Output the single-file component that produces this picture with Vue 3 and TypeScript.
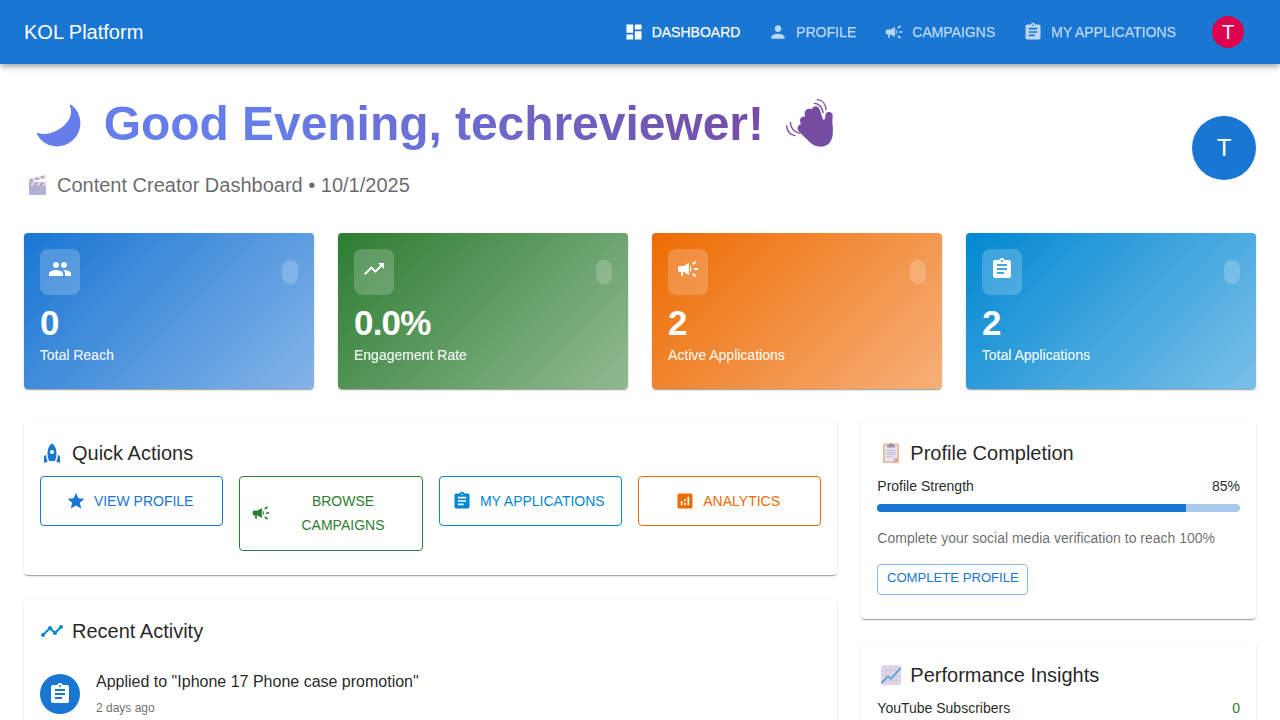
<script setup lang="ts">
const icons = {
  dashboard: 'M3 13h8V3H3v10zm0 8h8v-6H3v6zm10 0h8V11h-8v10zm0-18v6h8V3h-8z',
  person: 'M12 12c2.21 0 4-1.79 4-4s-1.79-4-4-4-4 1.79-4 4 1.79 4 4 4zm0 2c-2.67 0-8 1.34-8 4v2h16v-2c0-2.66-5.33-4-8-4z',
  campaign: 'M18 11v2h4v-2h-4zm-2 6.61c.96.71 2.21 1.65 3.2 2.39.4-.53.8-1.07 1.2-1.6-.99-.74-2.24-1.68-3.2-2.4-.4.54-.8 1.08-1.2 1.61zM20.4 5.6c-.4-.53-.8-1.07-1.2-1.6-.99.74-2.24 1.68-3.2 2.4.4.53.8 1.07 1.2 1.6.96-.72 2.21-1.65 3.2-2.4zM4 9c-1.1 0-2 .9-2 2v2c0 1.1.9 2 2 2h1v4h2v-4h1l5 3V6L8 9H4zm11.5 3c0-1.33-.58-2.53-1.5-3.35v6.69c.92-.81 1.5-2.01 1.5-3.34z',
  assignment: 'M19 3h-4.18C14.4 1.84 13.3 1 12 1c-1.3 0-2.4.84-2.82 2H5c-1.1 0-2 .9-2 2v14c0 1.1.9 2 2 2h14c1.1 0 2-.9 2-2V5c0-1.1-.9-2-2-2zm-7 0c.55 0 1 .45 1 1s-.45 1-1 1-1-.45-1-1 .45-1 1-1zm2 14H7v-2h7v2zm3-4H7v-2h10v2zm0-4H7V7h10v2z',
  people: 'M16 11c1.66 0 2.99-1.34 2.99-3S17.66 5 16 5c-1.66 0-3 1.34-3 3s1.34 3 3 3zm-8 0c1.66 0 2.99-1.34 2.99-3S9.66 5 8 5C6.34 5 5 6.34 5 8s1.34 3 3 3zm0 2c-2.33 0-7 1.17-7 3.5V19h14v-2.5c0-2.33-4.67-3.5-7-3.5zm8 0c-.29 0-.62.02-.97.05 1.16.84 1.97 1.97 1.97 3.45V19h6v-2.5c0-2.33-4.67-3.5-7-3.5z',
  trending: 'm16 6 2.29 2.29-4.88 4.88-4-4L2 16.59 3.41 18l6-6 4 4 6.3-6.29L22 12V6z',
  star: 'M12 17.27 18.18 21l-1.64-7.03L22 9.24l-7.19-.61L12 2 9.19 8.63 2 9.24l5.46 4.73L5.82 21z',
  analytics: 'M19 3H5c-1.1 0-2 .9-2 2v14c0 1.1.9 2 2 2h14c1.1 0 2-.9 2-2V5c0-1.1-.9-2-2-2zM9 17H7v-5h2v5zm4 0h-2v-3h2v3zm0-5h-2v-2h2v2zm4 5h-2V7h2v10z',
  rocket: 'M12 2.5s4.5 2.04 4.5 10.5c0 2.49-1.04 5.57-1.6 7H9.1c-.56-1.43-1.6-4.51-1.6-7C7.5 4.54 12 2.5 12 2.5zm2 8.5c0-1.1-.9-2-2-2s-2 .9-2 2 .9 2 2 2 2-.9 2-2zm-6.31 9.52c-.48-1.23-1.52-4.17-1.67-6.87l-1.13.75c-.56.38-.89 1-.89 1.67V22l3.69-1.48zM20 22v-5.93c0-.67-.33-1.29-.89-1.66l-1.13-.75c-.15 2.69-1.2 5.64-1.67 6.87L20 22z',
  timeline: 'M23 8c0 1.1-.9 2-2 2-.18 0-.35-.02-.51-.07l-3.56 3.55c.05.16.07.34.07.52 0 1.1-.9 2-2 2s-2-.9-2-2c0-.18.02-.36.07-.52l-2.55-2.55c-.16.05-.34.07-.52.07s-.36-.02-.52-.07l-4.55 4.56c.05.16.07.33.07.51 0 1.1-.9 2-2 2s-2-.9-2-2 .9-2 2-2c.18 0 .35.02.51.07l4.56-4.55C8.02 9.36 8 9.18 8 9c0-1.1.9-2 2-2s2 .9 2 2c0 .18-.02.36-.07.52l2.55 2.55c.16-.05.34-.07.52-.07s.36.02.52.07l3.55-3.56C19.02 8.35 19 8.18 19 8c0-1.1.9-2 2-2s2 .9 2 2z',
}

interface NavItem { label: string; icon: string; active?: boolean }
interface Stat { value: string; label: string; icon: string; tone: string }
interface Action { label: string; icon: string; tone: string }

const nav: NavItem[] = [
  { label: 'DASHBOARD', icon: icons.dashboard, active: true },
  { label: 'PROFILE', icon: icons.person },
  { label: 'CAMPAIGNS', icon: icons.campaign },
  { label: 'MY APPLICATIONS', icon: icons.assignment },
]

const stats: Stat[] = [
  { value: '0', label: 'Total Reach', icon: icons.people, tone: 'primary' },
  { value: '0.0%', label: 'Engagement Rate', icon: icons.trending, tone: 'success' },
  { value: '2', label: 'Active Applications', icon: icons.campaign, tone: 'warning' },
  { value: '2', label: 'Total Applications', icon: icons.assignment, tone: 'info' },
]

const actions: Action[] = [
  { label: 'VIEW PROFILE', icon: icons.star, tone: 'primary' },
  { label: 'BROWSE CAMPAIGNS', icon: icons.campaign, tone: 'success' },
  { label: 'MY APPLICATIONS', icon: icons.assignment, tone: 'info' },
  { label: 'ANALYTICS', icon: icons.analytics, tone: 'warning' },
]

const profileStrength = 85
</script>

<template>
  <div class="page">
    <header class="appbar">
      <div class="brand">KOL Platform</div>
      <nav class="nav">
        <a v-for="n in nav" :key="n.label" class="nav-item" :class="{ active: n.active }">
          <svg class="icon20" viewBox="0 0 24 24"><path :d="n.icon" /></svg>
          <span>{{ n.label }}</span>
        </a>
      </nav>
      <div class="avatar-sm">T</div>
    </header>

    <main class="container">
      <section class="hero">
        <div>
          <h1 class="greeting">
            <svg class="moon" viewBox="0 0 48 48">
              <path d="M36.6 4A23.2 23.2 0 1 1 2 33.6C1.6 32.4 2.3 31.8 3.4 32.1C13 35 25 30 31.8 21.5C36.5 15.5 37 10.5 34.9 5.2C34.5 3.9 35.4 3.2 36.6 4Z" />
            </svg>
            <span class="greeting-text">Good Evening, techreviewer!</span>
            <svg class="wave" viewBox="12 24 156 156">
              <path d="M136 78C136 70 140 66 147 66C154 66 158 70 158 77L157 98C159 110 159 121 158 134C156 155 143 170 122 170C108 170 98 165 89 156L57 125C49 116 54 104 63 102C56 90 62 78 76 80C70 66 78 52 95 58C101 45 114 47 118 57C123 66 124 76 129 88C132 92 136 88 136 78Z" />
              <g class="wave-lines">
                <path d="M112 29C127 30 137 42 138 59" />
                <path d="M103 40C117 41 127 52 129 68" />
                <path d="M20 107C21 124 30 134 45 137" />
                <path d="M31 97C32 114 42 126 58 130" />
              </g>
            </svg>
          </h1>
          <p class="subtitle">
            <svg class="clapper" viewBox="0 0 20 22">
              <defs>
                <linearGradient id="clapper-body" x1="0" y1="0" x2="0" y2="1">
                  <stop offset="0" stop-color="#b9abc8" />
                  <stop offset="1" stop-color="#adb2da" />
                </linearGradient>
              </defs>
              <path d="M1 5.3 17.2 1 18 3.9 1.8 8.3Z" fill="#e6deef" />
              <path d="M1 5.3 3.8 4.6 6 7.2 1.8 8.3ZM6.5 3.9 9.5 3.1 11.7 5.6 8.7 6.4ZM12.3 2.3 15.2 1.5 17.2 4.1 14.3 4.9Z" fill="#bba9cb" />
              <rect x="1" y="8" width="17" height="13" rx="1" fill="url(#clapper-body)" />
              <path d="M1 8.5h17v3H1Z" fill="#e3dbed" />
              <path d="M1 8.5h3L2.4 11.5H1ZM7 8.5h3l-1.8 3h-3ZM13 8.5h3l-1.8 3h-3Z" fill="#b39fc6" />
            </svg>
            <span>Content Creator Dashboard • 10/1/2025</span>
          </p>
        </div>
        <div class="avatar-lg">T</div>
      </section>

      <section class="stats">
        <article v-for="s in stats" :key="s.label" class="stat" :class="s.tone">
          <div class="stat-head">
            <div class="stat-icon">
              <svg class="icon24" viewBox="0 0 24 24"><path :d="s.icon" /></svg>
            </div>
            <span class="stat-chip"></span>
          </div>
          <div class="stat-value">{{ s.value }}</div>
          <div class="stat-label">{{ s.label }}</div>
        </article>
      </section>

      <div class="columns">
        <div class="column">
          <section class="card">
            <h2 class="title">
              <svg class="icon24 blue" viewBox="0 0 24 24"><path :d="icons.rocket" /></svg>
              <span>Quick Actions</span>
            </h2>
            <div class="actions">
              <button v-for="a in actions" :key="a.label" class="action" :class="a.tone">
                <svg class="icon20" viewBox="0 0 24 24"><path :d="a.icon" /></svg>
                <span>{{ a.label }}</span>
              </button>
            </div>
          </section>

          <section class="card">
            <h2 class="title">
              <svg class="icon24 sky" viewBox="0 0 24 24"><path :d="icons.timeline" /></svg>
              <span>Recent Activity</span>
            </h2>
            <div class="activity">
              <div class="activity-icon">
                <svg class="icon24" viewBox="0 0 24 24"><path :d="icons.assignment" /></svg>
              </div>
              <div>
                <div class="activity-text">Applied to "Iphone 17 Phone case promotion"</div>
                <div class="activity-time">2 days ago</div>
              </div>
            </div>
          </section>
        </div>

        <div class="column">
          <section class="card">
            <h2 class="title">
              <svg class="emoji" viewBox="0 0 28 24">
                <rect x="6" y="2.4" width="16" height="19.6" rx="1" fill="#eab795" />
                <path d="M7.7 4.2h12.6v12.6l-3.8 3.6H7.7Z" fill="#e9e3f1" />
                <path d="M20.3 16.6v3.8h-3.9Z" fill="#e09c72" />
                <path d="M16.4 20.4v-3.8h3.9Z" fill="#d2c5df" />
                <path d="M10 4h2a2 2 0 0 1 4 0h2v2.4h-8Z" fill="#9c94a5" />
                <path d="M9.2 9.3h9.6M9.2 11.4h9.6M9.2 13.5h9.6M9.2 15.6h6" stroke="#bdb2cd" stroke-width=".8" />
              </svg>
              <span>Profile Completion</span>
            </h2>
            <div class="row"><span>Profile Strength</span><span>{{ profileStrength }}%</span></div>
            <div class="track"><div class="fill" :style="{ width: profileStrength + '%' }"></div></div>
            <p class="hint">Complete your social media verification to reach 100%</p>
            <button class="small-button">COMPLETE PROFILE</button>
          </section>

          <section class="card">
            <h2 class="title">
              <svg class="emoji" viewBox="0 0 28 24">
                <rect x="4" y="2.3" width="20" height="20" rx="1.5" fill="#dfd7e8" />
                <path d="M8.7 2.3v20M14 2.3v20M19 2.3v20M4 7.6h20M4 12.5h20M4 17.5h20" stroke="#cdc5d8" stroke-width=".8" />
                <path d="m4.3 20.2 6.4-6.6 3.3 2.3 9.7-11" fill="none" stroke="#579fda" stroke-width="1.7" />
              </svg>
              <span>Performance Insights</span>
            </h2>
            <div class="row"><span>YouTube Subscribers</span><span class="positive">0</span></div>
          </section>
        </div>
      </div>
    </main>
  </div>
</template>

<style>
html, body { margin: 0; height: 100%; overflow: hidden; background: #fff; }
</style>

<style scoped>
.page {
  height: 720px;
  overflow: hidden;
  font-family: "Liberation Sans", Arial, Helvetica, sans-serif;
  color: rgba(0, 0, 0, 0.87);
  background: #fff;
}
.page *, .page { box-sizing: border-box; }
h1, h2, p { margin: 0; font-weight: 400; }
svg { display: block; flex: none; fill: currentColor; }
.icon20 { width: 20px; height: 20px; }
.icon24 { width: 24px; height: 24px; }

.appbar {
  position: relative;
  display: flex;
  align-items: center;
  height: 64px;
  padding: 0 36px 0 24px;
  background: #1976d2;
  color: #fff;
  box-shadow: 0 2px 4px -1px rgba(0, 0, 0, 0.2), 0 4px 5px 0 rgba(0, 0, 0, 0.14), 0 1px 10px 0 rgba(0, 0, 0, 0.12);
}
.brand { flex: 1; font-size: 20px; line-height: 32px; }
.nav { display: flex; gap: 28px; margin-right: 36px; }
.nav-item {
  display: flex;
  align-items: center;
  gap: 8px;
  font-size: 14px;
  line-height: 24px;
  white-space: nowrap;
  opacity: 0.7;
  -webkit-text-stroke: 0.25px currentColor;
}
.nav-item.active { opacity: 1; }
.avatar-sm, .avatar-lg {
  display: flex;
  align-items: center;
  justify-content: center;
  border-radius: 50%;
  color: #fff;
}
.avatar-sm { width: 32px; height: 32px; font-size: 20px; background: #dc004e; }
.avatar-lg { width: 64px; height: 64px; font-size: 24px; background: #1976d2; }

.container { padding: 32px 24px 0; }
.hero {
  display: flex;
  align-items: center;
  justify-content: space-between;
  height: 104.8px;
  margin-bottom: 32px;
}
.greeting {
  display: flex;
  align-items: center;
  width: 823px;
  height: 56px;
  margin-bottom: 16.8px;
  font-size: 48px;
  line-height: 56px;
  font-weight: 700;
  letter-spacing: -0.05px;
  white-space: nowrap;
  color: transparent;
  background: linear-gradient(45deg, #667eea 30%, #764ba2 90%);
  -webkit-background-clip: text;
  background-clip: text;
}
.moon { width: 48px; height: 48px; margin: 2px 21px 0 10.7px; fill: #667eea; }
.wave { width: 52px; height: 52px; margin-left: auto; margin-right: 11px; fill: #764ba2; }
.wave-lines { fill: none; stroke: #764ba2; stroke-width: 4; stroke-linecap: round; }
.subtitle {
  display: flex;
  align-items: center;
  font-size: 20px;
  line-height: 32px;
  color: rgba(0, 0, 0, 0.6);
}
.clapper { width: 20px; height: 22px; margin: 0 9px 0 4px; }

.stats {
  display: grid;
  grid-template-columns: repeat(4, 1fr);
  gap: 24px;
  margin-bottom: 32px;
}
.stat {
  height: 156px;
  padding: 16px;
  border-radius: 4px;
  color: #fff;
  box-shadow: 0 2px 1px -1px rgba(0, 0, 0, 0.2), 0 1px 1px 0 rgba(0, 0, 0, 0.14), 0 1px 3px 0 rgba(0, 0, 0, 0.12);
}
.stat.primary { background: linear-gradient(135deg, #1976d2, #85b4e8); }
.stat.success { background: linear-gradient(135deg, #2e7d32, #90ba92); }
.stat.warning { background: linear-gradient(135deg, #ed6c02, #f6b07a); }
.stat.info { background: linear-gradient(135deg, #0288d1, #7ac0e8); }
.stat-head {
  display: flex;
  align-items: center;
  justify-content: space-between;
  margin-bottom: 8px;
}
.stat-icon {
  width: 40px;
  height: 46px;
  padding: 8px;
  border-radius: 8px;
  background: rgba(255, 255, 255, 0.2);
}
.stat-chip { width: 16px; height: 24px; border-radius: 8px; background: rgba(255, 255, 255, 0.2); }
.stat-value {
  padding-bottom: 3px;
  font-size: 35px;
  line-height: 39px;
  font-weight: 700;
  letter-spacing: -0.8px;
}
.stat-label { font-size: 14px; line-height: 20px; opacity: 0.9; -webkit-text-stroke: 0.2px currentColor; }

.columns {
  display: grid;
  grid-template-columns: 813.33px 394.67px;
  gap: 24px;
  align-items: start;
}
.column { display: flex; flex-direction: column; gap: 24px; }
.card {
  padding: 16px 16px 24px;
  border-radius: 4px;
  background: #fff;
  box-shadow: 0 2px 1px -1px rgba(0, 0, 0, 0.2), 0 1px 1px 0 rgba(0, 0, 0, 0.14), 0 1px 3px 0 rgba(0, 0, 0, 0.12);
}
.title {
  display: flex;
  align-items: center;
  gap: 8px;
  margin-bottom: 7px;
  font-size: 20px;
  line-height: 32px;
}
.blue { color: #1976d2; }
.sky { color: #0288d1; }
.emoji { width: 28px; height: 24px; margin-right: -3px; }

.actions {
  display: grid;
  grid-template-columns: repeat(4, 1fr);
  gap: 16px;
  align-items: start;
}
.action {
  display: flex;
  align-items: center;
  justify-content: center;
  gap: 8px;
  padding: 12px 15px 12px 11px;
  border: 1px solid currentColor;
  border-radius: 4px;
  background: transparent;
  font: 14px/24.5px "Liberation Sans", Arial, sans-serif;
  text-align: center;
}
.action.primary { color: #1976d2; }
.action.success { color: #2e7d32; }
.action.info { color: #0288d1; }
.action.warning { color: #ed6c02; }

.activity { display: flex; align-items: center; gap: 16px; padding: 16px 0; }
.activity-icon {
  display: flex;
  align-items: center;
  justify-content: center;
  width: 40px;
  height: 40px;
  border-radius: 50%;
  color: #fff;
  background: #1976d2;
}
.activity-text { font-size: 16px; line-height: 24px; }
.activity-time { margin-top: 4px; font-size: 12px; line-height: 20px; color: rgba(0, 0, 0, 0.6); }

.row { display: flex; justify-content: space-between; font-size: 14px; line-height: 20px; }
.positive { color: #2e7d32; }
.track { height: 8px; margin: 8px 0 16px; border-radius: 4px; overflow: hidden; background: #a7caed; }
.fill { height: 100%; background: #1976d2; }
.hint { margin-bottom: 16px; font-size: 14px; line-height: 20px; color: rgba(0, 0, 0, 0.6); }
.small-button {
  display: block;
  width: 151px;
  padding: 3px 0 5px;
  border: 1px solid rgba(25, 118, 210, 0.5);
  border-radius: 4px;
  background: transparent;
  color: #1976d2;
  font: 13.2px/20.75px "Liberation Sans", Arial, sans-serif;
  letter-spacing: -0.05px;
  text-align: center;
  white-space: nowrap;
}
</style>
